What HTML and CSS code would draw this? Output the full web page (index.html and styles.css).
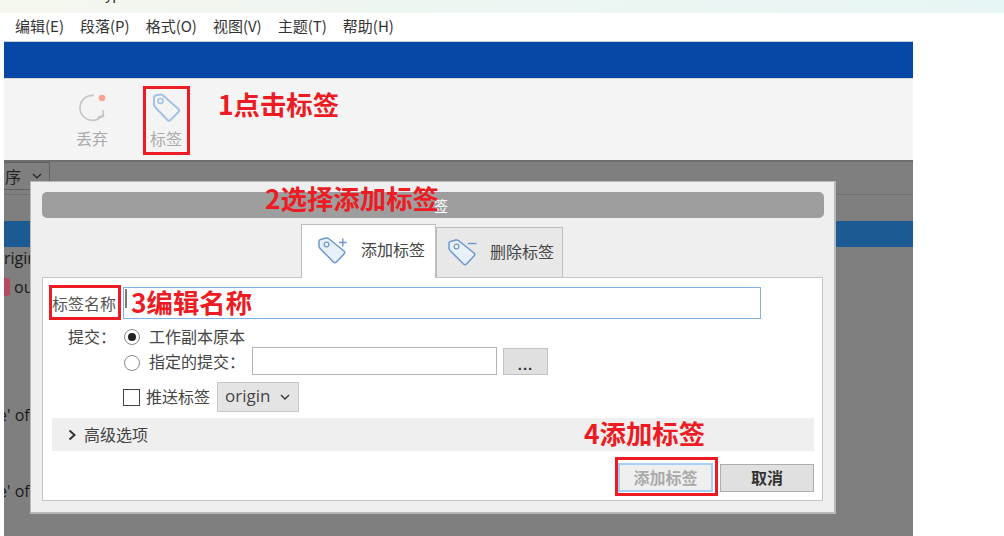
FILE: index.html
```html
<!DOCTYPE html>
<html lang="zh">
<head>
<meta charset="utf-8">
<title>添加标签</title>
<link rel="stylesheet" href="styles.css">
</head>
<body>
<div class="page">
  <div class="top-strip"><span class="top-text">yp</span></div>
  <nav class="menu">
    <span>编辑(E)</span><span>段落(P)</span><span>格式(O)</span><span>视图(V)</span><span>主题(T)</span><span>帮助(H)</span>
  </nav>
  <div class="app">
    <div class="blue-bar"></div>
    <div class="toolbar">
      <div class="tool tool-discard">
        <svg class="tool-icon" width="30" height="30" viewBox="0 0 30 30" fill="none">
          <path d="M17 2.500A12.500 12.500 0 1 0 26 21.500" stroke="#c3c7cc" stroke-width="1.700"/>
          <path d="M20.500 24 26.500 23.500 26 17" stroke="#c3c7cc" stroke-width="1.500"/>
          <circle cx="25" cy="5" r="3.300" fill="#f7a58c"/>
        </svg>
        <span>丢弃</span>
      </div>
      <div class="tool tool-tag">
        <svg class="tool-icon" width="30" height="30" viewBox="0 0 30 30" fill="none">
          <path d="M3 4.500Q3 3 4.500 2.500L9 1.500Q10.500 1.200 11.500 2L27.500 16Q29 17.500 27.500 19L19.500 27Q18 28.500 16.500 27L4 14Q3 13 3 11.500Z" stroke="#a5c1e8" stroke-width="2" stroke-linejoin="round"/>
          <circle cx="9.500" cy="8" r="2.500" stroke="#a5c1e8" stroke-width="1.600"/>
        </svg>
        <span>标签</span>
      </div>
    </div>
    <div class="workspace">
      <div class="sort-select"><span>序</span><svg width="10" height="6" viewBox="0 0 10 6" fill="none"><path d="M1 1l4 4 4-4" stroke="#222" stroke-width="1.200"/></svg></div>
      <div class="sort-line"></div>
      <div class="selected-row"></div>
      <div class="bg-text bg-origin">rigin</div>
      <div class="bg-out"><i></i><span>ou</span></div>
      <div class="bg-text bg-of-1">e' of</div>
      <div class="bg-text bg-of-2">e' of</div>
    </div>
  </div>

  <section class="dialog">
    <header class="dialog-title"><span>签</span></header>
    <div class="tabs">
      <div class="tab tab-active">
        <svg width="29" height="28" viewBox="0 0 29 28" fill="none">
          <path d="M1 4Q1 3 2.500 2.500L8 1Q9.500 .7 10.500 1.500L26 14Q27.500 15.500 26 17L18.500 25Q17 26.500 15.500 25L2.500 12Q1 10.500 1 9Z" fill="#e8f0fa" stroke="#6b97cc" stroke-width="1.500" stroke-linejoin="round"/>
          <circle cx="8.500" cy="7.500" r="2.300" stroke="#6b97cc" stroke-width="1.300" fill="#fff"/>
          <path d="M21 5.500h7.500M24.800 1.500v8" stroke="#6b97cc" stroke-width="1.400"/>
        </svg>
        <span>添加标签</span>
      </div>
      <div class="tab">
        <svg width="29" height="28" viewBox="0 0 29 28" fill="none">
          <path d="M1 4Q1 3 2.500 2.500L8 1Q9.500 .7 10.500 1.500L26 14Q27.500 15.500 26 17L18.500 25Q17 26.500 15.500 25L2.500 12Q1 10.500 1 9Z" fill="#e8f0fa" stroke="#6b97cc" stroke-width="1.500" stroke-linejoin="round"/>
          <circle cx="8.500" cy="7.500" r="2.300" stroke="#6b97cc" stroke-width="1.300" fill="#fff"/>
          <path d="M20 4.500h8.500" stroke="#6b97cc" stroke-width="1.400"/>
        </svg>
        <span>删除标签</span>
      </div>
    </div>
    <div class="panel">
      <div class="name-row">
        <label class="name-label">标签名称</label>
        <div class="name-input"><i class="caret"></i></div>
      </div>
      <div class="commit-row">
        <span class="commit-label">提交：</span>
        <span class="radio radio-on"></span>
        <span class="commit-text">工作副本原本</span>
      </div>
      <div class="commit-row commit-row-2">
        <span class="radio"></span>
        <span class="commit-text">指定的提交：</span>
        <div class="commit-input"></div>
        <div class="dots-btn">...</div>
      </div>
      <div class="push-row">
        <span class="checkbox"></span>
        <span class="push-text">推送标签</span>
        <div class="remote-select"><span>origin</span><svg width="10" height="6" viewBox="0 0 10 6" fill="none"><path d="M1 1l4 4 4-4" stroke="#333" stroke-width="1.300"/></svg></div>
      </div>
      <div class="advanced">
        <svg width="9" height="12" viewBox="0 0 9 12" fill="none"><path d="M1.500 1.500 6.500 6l-5 4.500" stroke="#333" stroke-width="2"/></svg>
        <span>高级选项</span>
      </div>
      <div class="actions">
        <button class="btn btn-add" type="button">添加标签</button>
        <button class="btn btn-cancel" type="button">取消</button>
      </div>
    </div>
  </section>

  <div class="mark mark-1"></div>
  <div class="note note-1">1点击标签</div>
  <div class="note note-2">2选择添加标签</div>
  <div class="mark mark-2"></div>
  <div class="mark mark-3"></div>
  <div class="note note-3">3编辑名称</div>
  <div class="note note-4">4添加标签</div>
  <div class="mark mark-4"></div>
</div>
</body>
</html>
```

FILE: styles.css
```css
* { box-sizing: border-box; }
html, body { margin: 0; padding: 0; background: #fff; }
body { font-family: "Noto Sans CJK SC", "Liberation Sans", sans-serif; }
.page { position: relative; width: 1004px; height: 536px; overflow: hidden; color: #333; }

.top-strip { height: 13px; background: linear-gradient(90deg, #f4f7ee, #e6f5f5); position: relative; overflow: hidden; }
.top-text { position: absolute; left: 105px; top: -17px; font-size: 14px; color: #222; }

.menu { height: 28px; display: flex; align-items: center; gap: 16px; padding: 0 0 3px 15px; font-size: 15px; color: #333; }

.app { margin-left: 4px; width: 909px; }
.blue-bar { height: 37px; background: #0747a6; border-top: 1px solid #c9d0d8; }
.toolbar { height: 82px; background: #f4f4f4; border-top: 1px solid #d8d8d8; display: flex; padding: 14px 0 0 66px; gap: 30px; }
.tool { width: 44px; display: flex; flex-direction: column; align-items: center; font-size: 16px; color: #aaa; line-height: 20px; }
.tool-icon { margin-bottom: 5px; }

.workspace { position: relative; height: 376px; background: #7f7f7f; border-top: 2px solid #6e6e6e; overflow: hidden; }
.sort-select { position: absolute; left: -1px; top: 0; width: 47px; height: 28px; border: 1px solid #5f5f5f; font-size: 16px; color: #222; display: flex; align-items: center; justify-content: flex-end; gap: 11px; padding-right: 7px; }
.sort-line { position: absolute; left: 0; right: 0; top: 32px; height: 1px; background: #6f6f6f; }
.selected-row { position: absolute; left: 0; right: 0; top: 59px; height: 26px; background: #1c5a94; }
.bg-text { position: absolute; left: 0; font-family: "Open Sans", sans-serif; font-size: 16px; color: #1a1a1a; line-height: 18px; }
.bg-origin { top: 87px; }
.bg-of-1 { top: 244px; left: -6px; }
.bg-of-2 { top: 320px; left: -6px; }
.bg-out { position: absolute; left: 0; top: 114px; display: flex; align-items: center; gap: 4px; font-family: "Open Sans", sans-serif; font-size: 16px; color: #1a1a1a; }
.bg-out i { width: 6px; height: 18px; background: #b54a62; border-radius: 0 2px 2px 0; }

.dialog { position: absolute; left: 30px; top: 181px; width: 806px; height: 333px; background: #efefef; border: 1px solid #b9b9b9; border-width: 1px 2px 2px 1px; padding: 10px 10px 0 11px; }
.dialog-title { height: 26px; background: #9e9e9e; border-radius: 5px; display: flex; align-items: center; font-size: 14px; color: #fff; padding-left: 392px; }

.tabs { display: flex; height: 53px; margin-left: 259px; margin-top: 6px; position: relative; z-index: 1; }
.tab { width: 127px; height: 50px; margin-top: 3px; border: 1px solid #bdbdbd; border-bottom: none; background: #e8e8e8; display: flex; align-items: center; padding: 0 0 0 11px; gap: 13px; font-size: 16px; color: #444; }
.tab span { padding-bottom: 3px; }
.tab-active { width: 135px; height: 54px; margin-top: 0; background: #fff; padding: 0 0 2px 16px; gap: 14px; }
.tab svg { flex: none; }

.panel { background: #fff; border: 1px solid #c4c4c4; height: 224px; margin-right: 1px; padding: 9px 8px 0 9px; display: flex; flex-direction: column; }

.name-row { display: flex; align-items: center; height: 32px; gap: 6px; font-size: 16px; }
.name-label { width: 65px; color: #555; white-space: nowrap; }
.name-input { width: 638px; height: 32px; border: 1px solid #7fb3e6; position: relative; }
.caret { position: absolute; left: 1px; top: 1px; width: 2px; height: 19px; background: #777; }

.commit-row { display: flex; align-items: center; height: 24px; font-size: 16px; color: #444; margin-top: 6px; padding-left: 16px; }
.commit-row-2 { height: 28px; margin-top: -2px; padding-left: 72px; }
.commit-row-2 .radio { margin-top: 3px; }
.commit-label { width: 56px; padding-bottom: 3px; }
.radio { width: 16px; height: 16px; border: 1px solid #8a8a8a; border-radius: 50%; background: #fff; position: relative; flex: none; }
.radio-on::after { content: ""; position: absolute; left: 3px; top: 3px; width: 8px; height: 8px; border-radius: 50%; background: #222; }
.commit-text { margin-left: 9px; white-space: nowrap; padding-bottom: 3px; }
.commit-row-2 .commit-text { padding-bottom: 0; }
.commit-input { width: 245px; height: 28px; border: 1px solid #b4b4b4; margin-left: 7px; flex: none; }
.dots-btn { width: 45px; height: 27px; margin-left: 6px; padding-top: 6px; background: #e0e0e0; border: 1px solid #c2c2c2; display: flex; align-items: center; justify-content: center; font-weight: 700; font-size: 15px; letter-spacing: 1px; color: #333; font-family: "Liberation Sans", sans-serif; flex: none; }

.push-row { display: flex; align-items: center; height: 30px; margin-top: 7px; padding-left: 71px; font-size: 16px; color: #444; }
.checkbox { width: 17px; height: 17px; border: 1px solid #444; background: #fff; flex: none; }
.push-text { margin-left: 6px; padding-bottom: 3px; }
.remote-select { width: 82px; height: 30px; margin-left: 7px; background: #e4e4e4; border: 1px solid #c8c8c8; display: flex; align-items: center; justify-content: space-between; padding: 0 8px 0 7px; font-family: "Open Sans", sans-serif; font-size: 17px; color: #444; }
.remote-select span { padding-bottom: 4px; }

.advanced { height: 33px; margin-top: 6px; background: #efefef; display: flex; align-items: center; padding-left: 16px; gap: 7px; font-size: 16px; color: #444; }
.advanced span { padding-bottom: 2px; }

.actions { display: flex; justify-content: flex-end; align-items: flex-end; gap: 7px; margin-top: 12px; }
.btn { height: 28px; font-family: inherit; font-size: 16px; font-weight: 700; padding: 0; border-radius: 0; }
.btn-add { width: 95px; height: 29px; background: #efefef; border: 2px solid #a5d0f5; color: #aaa; padding-bottom: 4px; }
.btn-cancel { width: 94px; background: #e0e0e0; border: 1px solid #adadad; color: #333; padding-bottom: 2px; }

.mark { position: absolute; border: 3px solid #ed1c24; pointer-events: none; }
.mark-1 { left: 143px; top: 86px; width: 47px; height: 69px; }
.mark-2 { left: 310px; top: 228px; width: 126px; height: 39px; }
.mark-3 { left: 49px; top: 285px; width: 72px; height: 35px; }
.mark-4 { left: 615px; top: 457px; width: 103px; height: 39px; }
.note { position: absolute; color: #ed1c24; font-weight: 700; font-size: 26.400px; line-height: 30px; white-space: nowrap; }
.note-1 { left: 218px; top: 89px; }
.note-2 { left: 265px; top: 183px; }
.note-3 { left: 131px; top: 287px; }
.note-4 { left: 584px; top: 418px; }
```
